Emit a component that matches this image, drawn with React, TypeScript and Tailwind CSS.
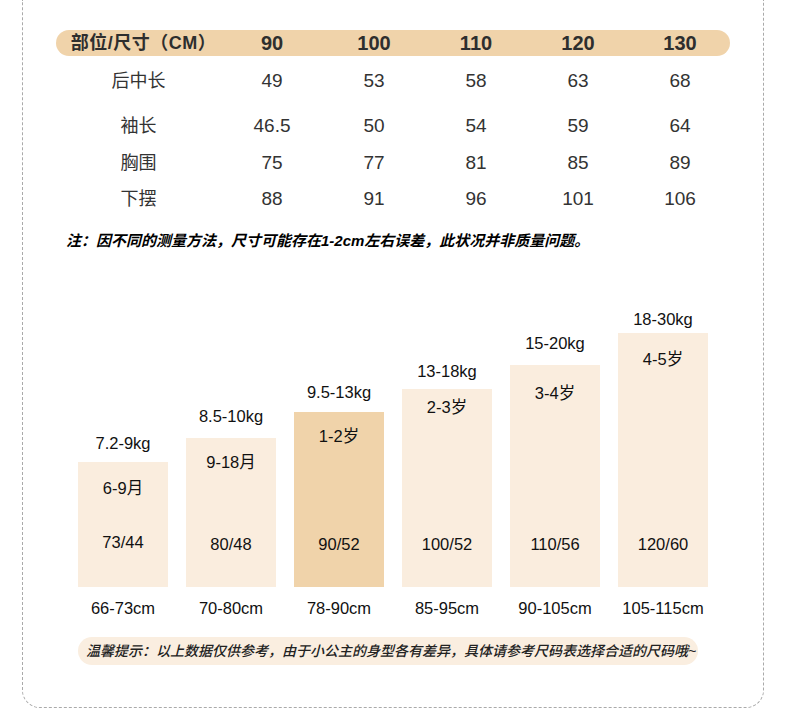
import React from 'react';

const font = { fontFamily: '"Liberation Sans", Arial, "Noto Sans CJK SC", sans-serif' };

const cols = ['90', '100', '110', '120', '130'];

const rows = [
  { name: '后中长', vals: ['49', '53', '58', '63', '68'], h: 'h-[50px]' },
  { name: '袖长', vals: ['46.5', '50', '54', '59', '64'], h: 'h-[40px]' },
  { name: '胸围', vals: ['75', '77', '81', '85', '89'], h: 'h-[34px]' },
  { name: '下摆', vals: ['88', '91', '96', '101', '106'], h: 'h-[38px]' },
];

const bars = [
  { kg: '7.2-9kg', age: '6-9月', size: '73/44', cm: '66-73cm', h: 'h-[125px]', mb: 'mb-[9px]', pt: 'pt-[16px]', pb: 'pb-[35px]', hi: false },
  { kg: '8.5-10kg', age: '9-18月', size: '80/48', cm: '70-80cm', h: 'h-[149px]', mb: 'mb-[12px]', pt: 'pt-[14px]', pb: 'pb-[33px]', hi: false },
  { kg: '9.5-13kg', age: '1-2岁', size: '90/52', cm: '78-90cm', h: 'h-[175px]', mb: 'mb-[10px]', pt: 'pt-[14px]', pb: 'pb-[33px]', hi: true },
  { kg: '13-18kg', age: '2-3岁', size: '100/52', cm: '85-95cm', h: 'h-[198px]', mb: 'mb-[8px]', pt: 'pt-[8px]', pb: 'pb-[33px]', hi: false },
  { kg: '15-20kg', age: '3-4岁', size: '110/56', cm: '90-105cm', h: 'h-[222px]', mb: 'mb-[12px]', pt: 'pt-[18px]', pb: 'pb-[33px]', hi: false },
  { kg: '18-30kg', age: '4-5岁', size: '120/60', cm: '105-115cm', h: 'h-[254px]', mb: 'mb-[4px]', pt: 'pt-[16px]', pb: 'pb-[33px]', hi: false },
];

export default function App() {
  return (
    <div className="w-[790px] h-[708px] bg-white overflow-hidden" style={font}>
      <div className="ml-[22px] w-[742px] h-[708px] border border-t-0 border-dashed border-[#aaaaaa] rounded-b-[18px]">
        {/* size table */}
        <div className="pt-[30px] pl-[33px]">
          <div className="w-[674px] h-[26px] rounded-full bg-[#f0d3aa] grid grid-cols-[165px_repeat(5,102px)] items-center text-[#2e2e2e] font-bold">
            <div className="text-[18px] text-center pl-[10px] leading-[26px] tracking-[0.5px]">部位/尺寸（CM）</div>
            {cols.map((c) => (
              <div key={c} className="text-[20px] text-center leading-[26px]">{c}</div>
            ))}
          </div>
          {rows.map((r) => (
            <div key={r.name} className={`w-[674px] grid grid-cols-[165px_repeat(5,102px)] items-center text-[#333333] ${r.h}`}>
              <div className="text-[18px] text-center">{r.name}</div>
              {r.vals.map((v, i) => (
                <div key={i} className="text-[19px] text-center">{v}</div>
              ))}
            </div>
          ))}
        </div>

        <p className="mt-[13px] pl-[43px] text-[15px] leading-[20px] italic font-bold text-black">
          注：因不同的测量方法，尺寸可能存在1-2cm左右误差，此状况并非质量问题。
        </p>

        {/* weight / age chart */}
        <div className="mt-[19px] pl-[55px] h-[348px] flex items-end gap-[18px] text-[16.5px] text-[#111111]">
          {bars.map((b) => (
            <div key={b.cm} className="w-[90px] flex flex-col items-center">
              <div className={`leading-[20px] whitespace-nowrap ${b.mb}`}>{b.kg}</div>
              <div className={`w-[90px] flex flex-col items-center justify-between ${b.h} ${b.pt} ${b.pb} ${b.hi ? 'bg-[#f0d3aa]' : 'bg-[#faedde]'}`}>
                <div className="leading-[20px]">{b.age}</div>
                <div className="leading-[20px]">{b.size}</div>
              </div>
              <div className="mt-[11px] leading-[20px] whitespace-nowrap">{b.cm}</div>
            </div>
          ))}
        </div>

        <div className="mt-[19px] ml-[55px] w-[620px] h-[28px] rounded-full bg-[#faeee0] pl-[8px] flex items-center">
          <span className="text-[14px] italic font-medium text-[#222222] whitespace-nowrap">
            温馨提示：以上数据仅供参考，由于小公主的身型各有差异，具体请参考尺码表选择合适的尺码哦~
          </span>
        </div>
      </div>
    </div>
  );
}
